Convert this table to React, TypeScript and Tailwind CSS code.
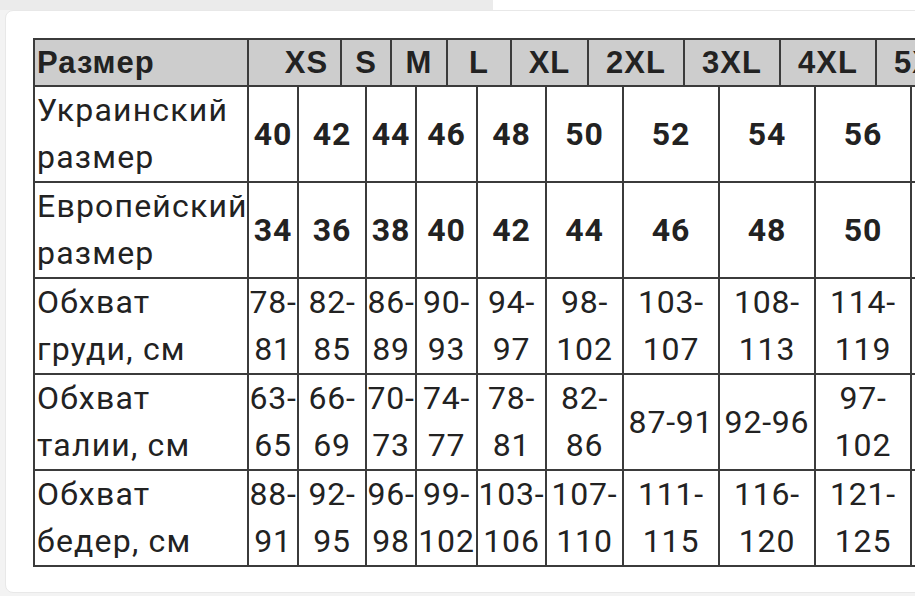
const headCols = "grid-cols-[214px_93px_50px_56px_64px_77px_96px_96px_96px_96px]";
const bodyCols = "grid-cols-[214px_50px_68px_50px_61px_69px_77px_96px_96px_96px_96px]";

const sizes = ["XS", "S", "M", "L", "XL", "2XL", "3XL", "4XL", "5XL"];

// "|" marks where the text goes onto a second line
const rows: { label: string; bold?: boolean; values: string[] }[] = [
    { label: "Украинский|размер", bold: true, values: ["40", "42", "44", "46", "48", "50", "52", "54", "56", "58"] },
    { label: "Европейский|размер", bold: true, values: ["34", "36", "38", "40", "42", "44", "46", "48", "50", "52"] },
    { label: "Обхват|груди, см", values: ["78-|81", "82-|85", "86-|89", "90-|93", "94-|97", "98-|102", "103-|107", "108-|113", "114-|119", "120-|125"] },
    { label: "Обхват|талии, см", values: ["63-|65", "66-|69", "70-|73", "74-|77", "78-|81", "82-|86", "87-91", "92-96", "97-|102", "103-|108"] },
    { label: "Обхват|бедер, см", values: ["88-|91", "92-|95", "96-|98", "99-|102", "103-|106", "107-|110", "111-|115", "116-|120", "121-|125", "126-|130"] },
];

const cell = "border-r-2 border-b-2 border-[#3b3b3b]";

const Lines = ({ text }: { text: string }) => (
    <span className="whitespace-nowrap">
        {text.split("|").map((t, i) => (
            <span key={i} className="block">{t}</span>
        ))}
    </span>
);

export default function App() {
    return (
        <div className="w-[915px] h-[596px] overflow-hidden bg-[#f3f3f3]">
            <div className="flex h-[10px]">
                <div className="w-[493px] bg-[#ebebeb]" />
                <div className="flex-1 bg-white" />
            </div>
            <div className="ml-[5px] w-[960px] h-[583px] rounded-lg bg-white border border-[#e8e8e8] pt-[27px] pl-[27px]">
                <div className={`grid ${headCols} w-max border-l-2 border-t-2 border-[#3b3b3b] bg-[#cdcdcd] text-[#222] font-['Liberation_Sans',Arial,sans-serif] font-bold text-[31px] tracking-[1px] leading-[45px]`}>
                    <div className={`${cell} pl-[2px]`}>Размер</div>
                    {sizes.map((s, i) => (
                        <div key={s} className={`${cell} text-center ${i === 0 ? "pl-[24px]" : ""}`}>{s}</div>
                    ))}
                </div>
                <div className={`grid ${bodyCols} w-max border-l-2 border-[#3b3b3b] text-[#222] font-['Roboto',sans-serif] text-[32px] leading-[47px] tracking-[0.8px]`}>
                    {rows.map((r) => (
                        <>
                            <div key={r.label} className={`${cell} pl-[2px] h-[96px] flex items-center tracking-[1.2px]`}>
                                <Lines text={r.label} />
                            </div>
                            {r.values.map((v, j) => (
                                <div key={r.label + j} className={`${cell} flex items-center justify-center text-center ${r.bold ? "font-bold" : ""}`}>
                                    <Lines text={v} />
                                </div>
                            ))}
                        </>
                    ))}
                </div>
            </div>
        </div>
    );
}
